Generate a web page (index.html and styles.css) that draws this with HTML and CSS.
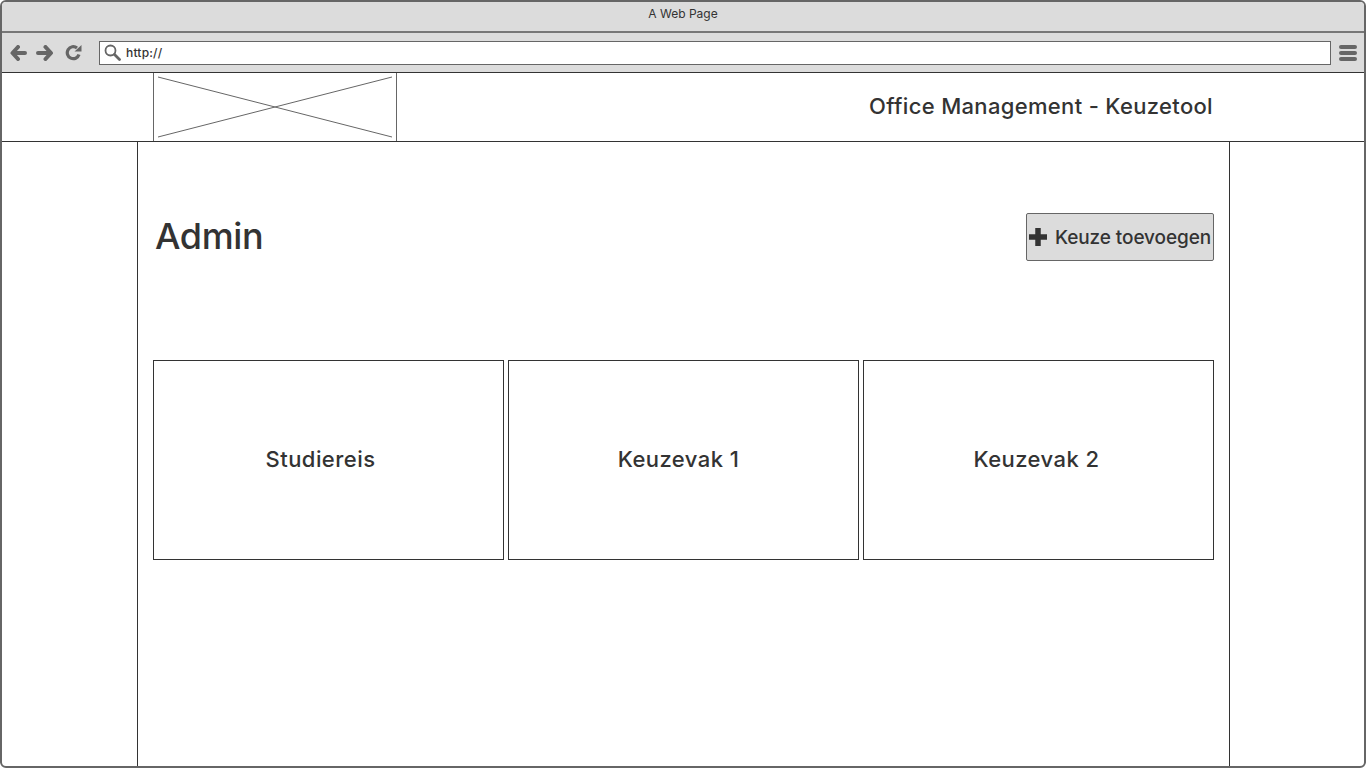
FILE: index.html
```html
<!DOCTYPE html>
<html lang="nl">
<head>
  <meta charset="UTF-8" />
  <title>A Web Page</title>
  <link rel="stylesheet" href="styles.css">
</head>
<body>
  <div class="venster">
    <div class="titelbalk">A Web Page</div>

    <!-- Browser knoppen en adresbalk -->
    <div class="werkbalk">
      <svg class="icoon" width="18" height="16" viewBox="0 0 18 16"><path d="M8 2 2.500 8 8 14M3 8h12" fill="none" stroke="#666" stroke-width="4" stroke-linejoin="round" stroke-linecap="round"/></svg>
      <svg class="icoon" width="18" height="16" viewBox="0 0 18 16"><path d="M9.500 2 15 8 9.500 14M14.500 8H2" fill="none" stroke="#666" stroke-width="4" stroke-linejoin="round" stroke-linecap="round"/></svg>
      <svg class="icoon herlaad" width="17" height="17" viewBox="0 0 17 17"><path d="M14 10.500A6 6 0 1 1 12 4" fill="none" stroke="#666" stroke-width="3.200"/><path d="M9.500 7.500 16.500 7.500 16.500 1Z" fill="#666"/></svg>
      <div class="adresbalk">
        <svg width="17" height="17" viewBox="0 0 17 17"><circle cx="6.500" cy="6.500" r="5" fill="none" stroke="#666" stroke-width="1.800"/><path d="M10.500 10.500 15.500 15.500" stroke="#666" stroke-width="2.800" stroke-linecap="round"/></svg>
        <span>http://</span>
      </div>
      <div class="menu-icoon"><i></i><i></i><i></i></div>
    </div>

    <!-- Koptekst met logo -->
    <header class="kop">
      <div class="logo">
        <svg width="243" height="68" viewBox="0 0 243 68"><path d="M4 4 238 64M4 64 238 4" stroke="#666" stroke-width="1" fill="none"/></svg>
      </div>
      <div class="kop-titel">Office Management - Keuzetool</div>
    </header>

    <div class="pagina">
      <main class="inhoud">
        <div class="admin-rij">
          <h1>Admin</h1>
          <button class="btn-toevoegen">
            <svg width="20" height="20" viewBox="0 0 20 20"><path d="M10 1v18M1 10h18" stroke="#333" stroke-width="5.500" fill="none"/></svg>
            Keuze toevoegen
          </button>
        </div>
        <div class="keuzes">
          <div class="keuze studiereis">Studiereis</div>
          <div class="keuze vak1">Keuzevak 1</div>
          <div class="keuze vak2">Keuzevak 2</div>
        </div>
      </main>
    </div>
  </div>
</body>
</html>
```

FILE: styles.css
```css
* {
  box-sizing: border-box;
}

body {
  margin: 0;
  font-family: Inter, Lato, sans-serif;
  color: #333;
  background: white;
}

.venster {
  height: 768px;
  display: flex;
  flex-direction: column;
  overflow: hidden;
  border: 2px solid #666;
  border-radius: 6px;
}

.titelbalk {
  height: 31px;
  flex: none;
  padding-top: 4px;
  text-align: center;
  font-size: 12px;
  line-height: 16px;
  background: #dcdcdc;
  border-bottom: 2px solid #777;
}

.werkbalk {
  height: 39px;
  flex: none;
  display: flex;
  align-items: center;
  padding: 0 7px 0 8px;
  background: #dcdcdc;
}

.icoon {
  margin-right: 8px;
}

.herlaad {
  margin-left: 3px;
  margin-right: 17px;
}

.adresbalk {
  flex: 1;
  height: 24px;
  display: flex;
  align-items: center;
  gap: 5px;
  padding-left: 4px;
  font-size: 12px;
  font-weight: 500;
  letter-spacing: 0.2px;
  background: white;
  border: 1px solid #666;
}

.menu-icoon {
  width: 18px;
  margin-left: 8px;
  display: flex;
  flex-direction: column;
  gap: 2px;
}

.menu-icoon i {
  height: 4px;
  border-radius: 2px;
  background: #666;
}

.kop {
  height: 70px;
  flex: none;
  display: flex;
  align-items: center;
  justify-content: space-between;
  padding: 0 151px;
  border-top: 1px solid #333;
  border-bottom: 1px solid #333;
}

.logo {
  width: 244px;
  height: 68px;
  border-left: 1px solid #666;
  border-right: 1px solid #666;
}

.logo svg {
  display: block;
}

.kop-titel {
  padding-bottom: 2px;
  font-size: 22px;
  font-weight: 500;
  letter-spacing: 0.33px;
}

.pagina {
  flex: 1;
  padding: 0 134px 0 135px;
}

.inhoud {
  height: 100%;
  padding: 71px 15px 0;
  border-left: 1px solid #333;
  border-right: 1px solid #333;
}

.admin-rij {
  height: 48px;
  display: flex;
  align-items: center;
  justify-content: space-between;
  margin-bottom: 99px;
}

h1 {
  margin: 0 0 2px 2px;
  font-size: 36px;
  font-weight: 500;
  letter-spacing: -0.4px;
}

.btn-toevoegen {
  width: 188px;
  height: 48px;
  display: flex;
  align-items: center;
  gap: 7px;
  padding: 0 1px;
  font-family: inherit;
  font-size: 19px;
  font-weight: 500;
  white-space: nowrap;
  letter-spacing: -0.1px;
  color: #333;
  background: #dcdcdc;
  border: 1px solid #666;
  border-radius: 2px;
}

.keuzes {
  display: grid;
  grid-template-columns: repeat(3, 351px);
  gap: 4px;
}

.keuze {
  height: 200px;
  display: flex;
  align-items: center;
  justify-content: center;
  padding-bottom: 3px;
  font-size: 22px;
  font-weight: 500;
  letter-spacing: 0.45px;
  border: 1px solid #333;
}

.studiereis {
  padding-right: 16px;
}

.vak1 {
  padding-right: 10px;
}

.vak2 {
  padding-right: 4px;
}
```
